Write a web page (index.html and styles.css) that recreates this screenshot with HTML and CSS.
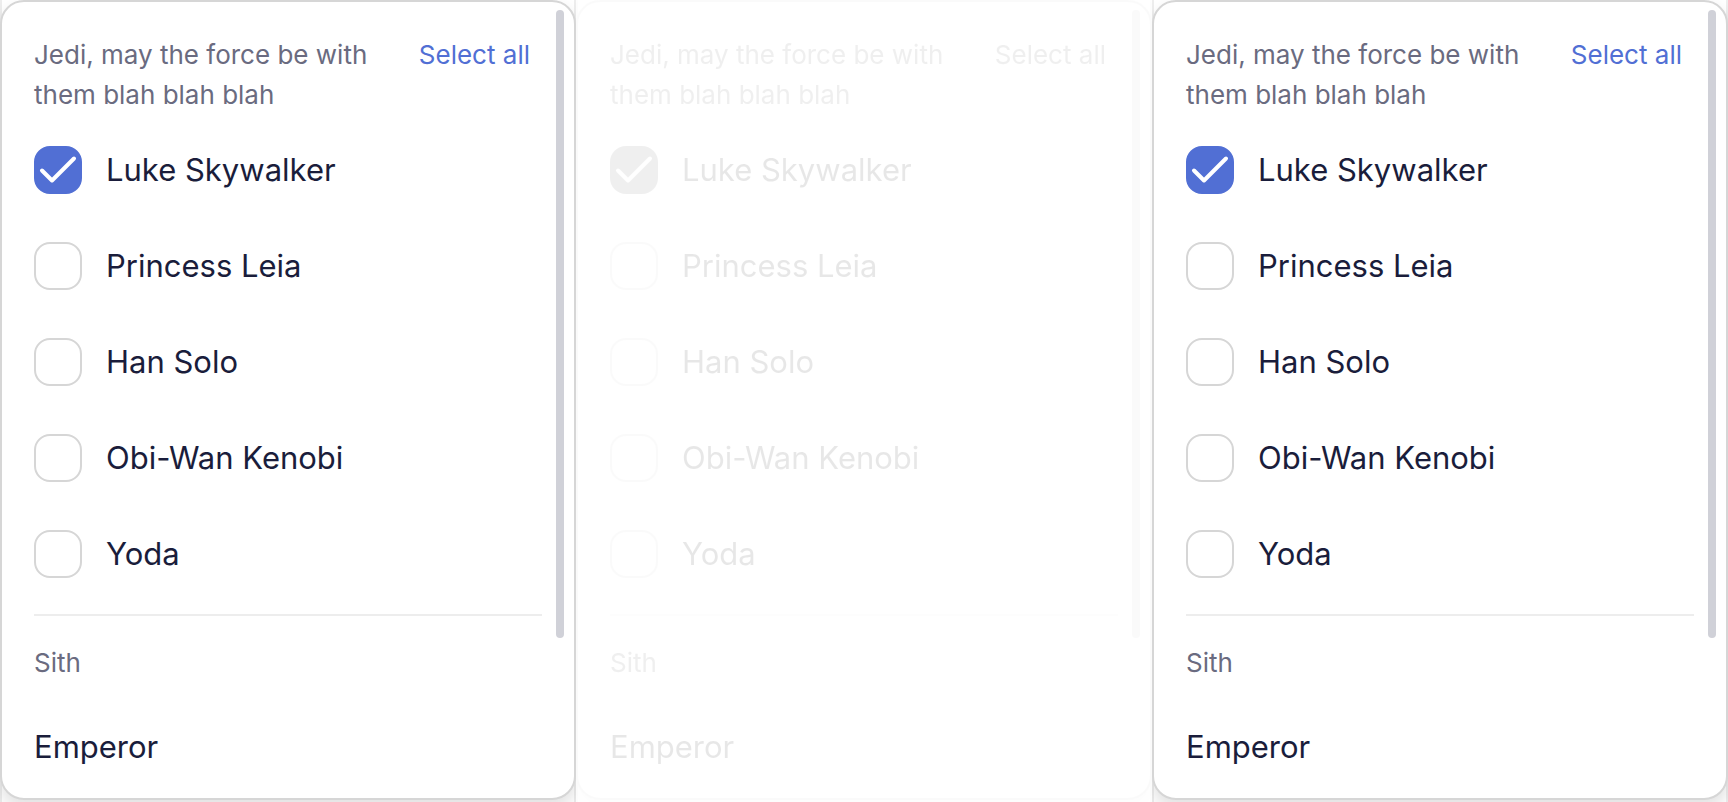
FILE: index.html
```html
<!DOCTYPE html>
<html lang="en">
<head>
<meta charset="utf-8">
<title>Selection lists</title>
<link rel="stylesheet" href="styles.css">
</head>
<body>
<main class="panels"></main>
<script src="panels.js"></script>
</body>
</html>
```
FILE: panels.js
```js
const names = ["Luke Skywalker", "Princess Leia", "Han Solo", "Obi-Wan Kenobi", "Yoda"];
const states = ["", "panel--disabled", ""];

const row = (name, i) => `
  <li><label class="option">
    <span class="box">
      <input class="box__input" type="checkbox" ${i === 0 ? "checked" : ""}>
      <svg class="box__tick" viewBox="0 0 48 48" aria-hidden="true"><path d="M8 24.5 18 34.5 40 12.5"/></svg>
    </span>
    <span>${name}</span>
  </label></li>`;

document.querySelector(".panels").innerHTML = states.map(state => `
  <div class="panel ${state}">
    <section class="card">
      <header class="group-head">
        <h2 class="group-title">Jedi, may the force be with them blah blah blah</h2>
        <button class="select-all" type="button">Select all</button>
      </header>
      <ul class="options">${names.map(row).join("")}</ul>
      <hr class="divider">
      <h2 class="group-title group-title--single">Sith</h2>
      <p class="entry">Emperor</p>
      <div class="scrollbar"></div>
    </section>
  </div>`).join("");
```
FILE: styles.css
```css
* {
  box-sizing: border-box;
}

body {
  margin: 0;
  background: #fff;
  color: #1a1d3b;
  font-family: Inter, "Liberation Sans", sans-serif;
  font-size: 31px;
  line-height: 48px;
}

.panels {
  display: grid;
  grid-template-columns: repeat(3, 1fr);
}

.panel {
  overflow: hidden;
  padding-bottom: 2px;
  background:
    linear-gradient(#ededed, #ededed) left / 2px 100% no-repeat,
    linear-gradient(#ededed, #ededed) right / 2px 100% no-repeat;
}

.panel--disabled {
  filter: grayscale(1);
  opacity: 0.1;
}

.card {
  position: relative;
  padding: 33px 32px 27px;
  border: 2px solid #d6d6d6;
  border-radius: 24px;
  background: #fff;
  box-shadow: 0 8px 16px rgba(0, 0, 0, 0.12);
}

.group-head {
  display: flex;
  justify-content: space-between;
  align-items: flex-start;
  gap: 32px;
  padding-right: 12px;
}

.group-title {
  flex: 1;
  max-width: 352px;
  margin: 0;
  color: #6a6b80;
  font-size: 26px;
  font-weight: 400;
  line-height: 40px;
}

.group-title--single {
  margin-top: 27px;
}

.select-all {
  padding: 0;
  border: 0;
  background: none;
  color: #516fd4;
  font: inherit;
  font-size: 26px;
  line-height: 40px;
}

.options {
  margin: 7px 0 0;
  padding: 0;
  list-style: none;
}

.option {
  display: flex;
  align-items: center;
  gap: 24px;
  padding: 24px 0;
}

.box {
  display: grid;
  width: 48px;
  height: 48px;
}

.box__input,
.box__tick {
  grid-area: 1 / 1;
  width: 48px;
  height: 48px;
}

.box__input {
  appearance: none;
  margin: 0;
  border: 2px solid #d6d6d6;
  border-radius: 16px;
  background: #fff;
}

.box__input:checked {
  border-color: #516fd4;
  background: #516fd4;
}

.box__tick {
  visibility: hidden;
  fill: none;
  stroke: #fff;
  stroke-width: 4;
  stroke-linecap: round;
  stroke-linejoin: round;
  pointer-events: none;
}

.box__input:checked + .box__tick {
  visibility: visible;
}

.divider {
  height: 2px;
  margin: 12px 0 0;
  border: 0;
  background: #ededed;
}

.entry {
  margin: 40px 0 0;
}

.scrollbar {
  position: absolute;
  top: 8px;
  right: 10px;
  width: 8px;
  height: 628px;
  border-radius: 4px;
  background: #d0d1d8;
}
```
